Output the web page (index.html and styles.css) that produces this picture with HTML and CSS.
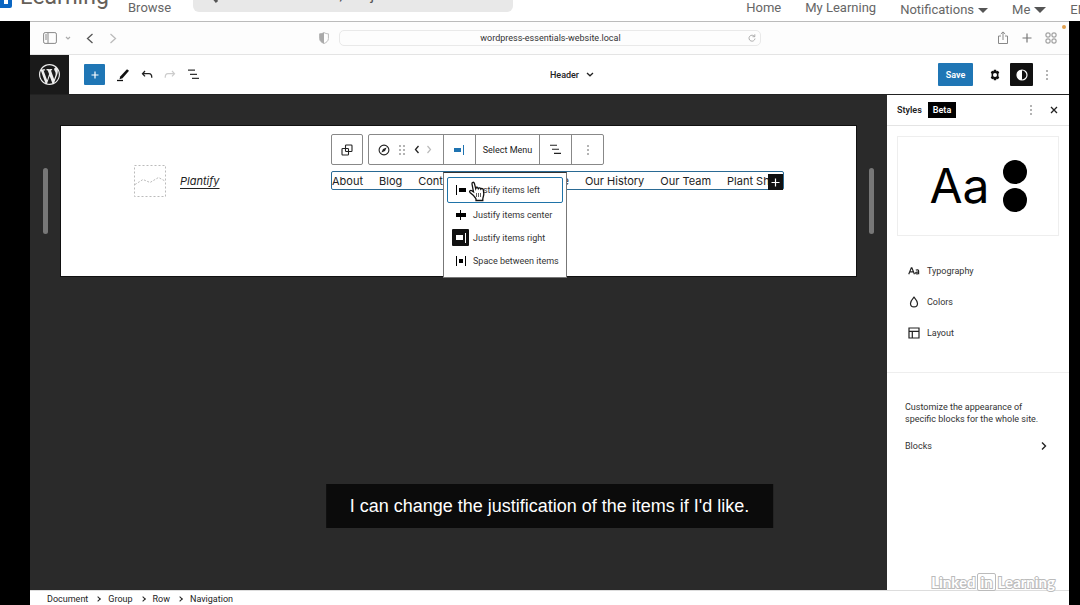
FILE: index.html
```html
<!DOCTYPE html>
<html lang="en">
<head>
<meta charset="utf-8">
<title>LinkedIn Learning</title>
<link rel="stylesheet" href="styles.css">
</head>
<body>
<header class="topbar">
  <a class="brand" href="#"><span class="brand-mark"><svg width="12" height="24" viewBox="0 0 12 24"><path d="M0 0h12v22a2 2 0 0 1-2 2H0z" fill="#0a66c2"/><path d="M4 8h4v12H4z" fill="#fff"/></svg></span><span class="brand-name">Learning</span></a>
  <a class="toplink browse" href="#">Browse</a>
  <div class="search"><svg width="14" height="14" viewBox="0 0 14 14"><path d="M9.500 1a4.500 4.500 0 1 0 0 .1M3 6l5 6" fill="none" stroke="#555" stroke-width="3"/></svg><input type="text" aria-label="Search" placeholder="Search for skills, subjects or software"></div>
  <nav class="topnav">
    <a class="toplink" href="#">Home</a>
    <a class="toplink" href="#">My Learning</a>
    <button class="toplink low" type="button">Notifications<i class="caret"></i></button>
    <button class="toplink low me" type="button">Me<i class="caret wide"></i></button>
    <button class="toplink low" type="button">EN</button>
  </nav>
</header>

<main class="stage">
  <div class="screen">
    <div class="browser">
      <div class="tools">
        <button type="button" aria-label="Sidebar"><svg width="14" height="12" viewBox="0 0 14 12"><rect x=".6" y=".6" width="12.800" height="10.800" rx="1.500" fill="none" stroke="#888"/><path d="M5 1v10M2 3h2M2 5h2M2 7h2" stroke="#888" fill="none"/></svg></button>
        <button type="button" aria-label="Tab groups" class="mini"><svg width="6" height="4" viewBox="0 0 6 4"><path d="M1 1l2 2 2-2" fill="none" stroke="#aaa" stroke-width="1.200"/></svg></button>
        <button type="button" aria-label="Back"><svg width="8" height="11" viewBox="0 0 8 11"><path d="M6.500 1L1.500 5.500l5 4.500" fill="none" stroke="#555" stroke-width="1.300"/></svg></button>
        <button type="button" aria-label="Forward"><svg width="8" height="11" viewBox="0 0 8 11"><path d="M1.500 1l5 4.500-5 4.500" fill="none" stroke="#bbb" stroke-width="1.300"/></svg></button>
        <svg class="shield" width="10" height="12" viewBox="0 0 10 12"><path d="M5 .6c1.500.9 2.800 1.100 4.400 1.200v4.700c0 2.500-2 4-4.400 5C2.600 10.500.6 9 .6 6.500V1.800C2.200 1.700 3.500 1.500 5 .6z" fill="#fff" stroke="#bbb"/><path d="M5 .6v10.900C2.600 10.500.6 9 .6 6.500V1.800C2.200 1.700 3.500 1.500 5 .6z" fill="#aaa"/></svg>
      </div>
      <div class="address"><input type="text" aria-label="Address" value="wordpress-essentials-website.local"><button type="button" aria-label="Reload"><svg width="8" height="8" viewBox="0 0 8 8"><path d="M6.500 2.500A3 3 0 1 0 7 4.500M4.500 2.700h2.300V.3" fill="none" stroke="#999" stroke-width=".8"/></svg></button></div>
      <div class="tools end">
        <button type="button" aria-label="Share"><svg width="12" height="14" viewBox="0 0 12 14"><path d="M4 5H1.500v7.500h9V5H8M6 9V1M3.800 3L6 .9 8.200 3" fill="none" stroke="#888"/></svg></button>
        <button type="button" aria-label="New tab"><svg width="10" height="10" viewBox="0 0 10 10"><path d="M5 .5v9M.5 5h9" stroke="#777" stroke-width="1.200"/></svg></button>
        <button type="button" aria-label="Tab overview"><svg width="12" height="12" viewBox="0 0 12 12"><g fill="none" stroke="#888"><rect x="1" y="1" width="4" height="4" rx="1"/><rect x="7" y="1" width="4" height="4" rx="1"/><rect x="1" y="7" width="4" height="4" rx="1"/><rect x="7" y="7" width="4" height="4" rx="1"/></g></svg></button>
      </div>
      <span class="rec-dot"></span>
    </div>

    <div class="editor-bar">
      <a class="wp" href="#" aria-label="WordPress"><svg width="21" height="21" viewBox="0 0 20 20" fill="#eee"><path d="M20 10c0-5.510-4.490-10-10-10C4.480 0 0 4.490 0 10c0 5.520 4.480 10 10 10 5.510 0 10-4.480 10-10zM7.780 15.370L4.370 6.220c.55-.02 1.170-.08 1.170-.08.5-.06.44-1.130-.06-1.110 0 0-1.450.11-2.370.11-.18 0-.37 0-.58-.01C4.120 2.690 6.870 1.110 10 1.110c2.330 0 4.450.87 6.050 2.340-.68-.11-1.650.39-1.650 1.580 0 .74.45 1.360.9 2.100.35.61.55 1.360.55 2.460 0 1.490-1.400 5-1.400 5l-3.030-8.370c.54-.02.82-.17.82-.17.5-.05.44-1.250-.06-1.220 0 0-1.440.12-2.380.12-.87 0-2.330-.12-2.330-.12-.5-.03-.56 1.200-.06 1.220l.92.08 1.260 3.410zM17.410 10c.24-.64.74-1.870.43-4.250.7 1.290 1.050 2.710 1.050 4.250 0 3.290-1.730 6.240-4.400 7.780.97-2.590 1.940-5.200 2.920-7.780zM6.100 18.090C3.120 16.650 1.110 13.530 1.110 10c0-1.300.23-2.480.72-3.590C3.250 10.300 4.670 14.200 6.100 18.090zm4.030-6.630l2.580 6.980c-.86.29-1.760.45-2.710.45-.79 0-1.570-.11-2.290-.33.81-2.380 1.620-4.740 2.420-7.100z"/></svg></a>
      <div class="edit-tools">
        <button class="insert" type="button" aria-label="Add block"><svg width="8" height="8" viewBox="0 0 8 8"><path d="M4 .5v7M.5 4h7" stroke="#fff" stroke-width="1.200"/></svg></button>
        <button type="button" aria-label="Edit"><svg width="14" height="14" viewBox="0 0 14 14"><path d="M11 1.300l2 1.500-6.500 7.500-3 1 .7-2.800z" fill="#111"/><path d="M1 12.500h6" stroke="#111" stroke-width="1.300"/></svg></button>
        <button type="button" aria-label="Undo"><svg width="12" height="10" viewBox="0 0 12 10"><path d="M4 1L1.500 3.700 4 6.400M1.500 3.700H8c2 0 2.800 1.300 2.800 4" fill="none" stroke="#222" stroke-width="1.300"/></svg></button>
        <button type="button" aria-label="Redo"><svg width="12" height="10" viewBox="0 0 12 10"><path d="M8 1l2.500 2.700L8 6.400M10.500 3.700H4C2 3.700 1.200 5 1.200 7.700" fill="none" stroke="#ccc" stroke-width="1.200"/></svg></button>
        <button type="button" aria-label="List view"><svg width="13" height="11" viewBox="0 0 13 11"><path d="M1 1.200h7M3 5.300h7M5 9.400h7" stroke="#333" stroke-width="1.200"/></svg></button>
      </div>
      <button class="doc-title" type="button">Header<svg width="8" height="5" viewBox="0 0 8 5"><path d="M1 1l3 2.800L7 1" fill="none" stroke="#222" stroke-width="1.300"/></svg></button>
      <div class="edit-actions">
        <button class="save" type="button">Save</button>
        <button class="gear" type="button" aria-label="Settings"><svg width="12" height="12" viewBox="0 0 12 12"><path d="M4.900.8h2.200l.4 1.400 1.400-.4 1.400 1.800-.9 1.200v2.400l.9 1.200-1.400 1.800-1.400-.4-.4 1.400H4.900l-.4-1.400-1.400.4-1.400-1.800.9-1.200V4.800l-.9-1.200 1.400-1.800 1.400.4z" fill="#111"/><circle cx="6" cy="6" r="2" fill="#fff"/></svg></button>
        <button class="contrast" type="button" aria-label="Styles"><svg width="12" height="12" viewBox="0 0 12 12"><circle cx="6" cy="6" r="5" fill="none" stroke="#fff" stroke-width="1.200"/><path d="M6 1a5 5 0 0 0 0 10z" fill="#fff"/></svg></button>
        <button class="more" type="button" aria-label="Options"><svg width="4" height="12" viewBox="0 0 4 12" fill="#555"><circle cx="2" cy="2" r=".8"/><circle cx="2" cy="6" r=".8"/><circle cx="2" cy="10" r=".8"/></svg></button>
      </div>
    </div>

    <div class="workspace">
      <section class="canvas">
        <span class="handle"></span>
        <div class="sheet">
          <div class="site">
            <svg width="32" height="32" viewBox="0 0 32 32"><rect x=".5" y=".5" width="31" height="31" fill="none" stroke="#bbb" stroke-dasharray="2 2"/><path d="M1 19.500l8-5 7 3 8.500-5L31 16" fill="none" stroke="#bbb" stroke-dasharray="2 1.500"/></svg>
            <a class="site-title" href="#">Plantify</a>
          </div>
          <div class="menu-block">
            <div class="block-tools">
              <div class="tool-group"><button class="sq" type="button" aria-label="Select parent"><svg width="12" height="12" viewBox="0 0 12 12"><g fill="none" stroke="#222" stroke-width="1.100"><rect x="4.500" y="1" width="6.500" height="6.500" rx=".8"/><rect x="1" y="4.500" width="6.500" height="6.500" rx=".8"/></g></svg></button></div>
              <div class="tool-group">
                <div class="mover">
                  <button type="button" aria-label="Navigation"><svg width="12" height="12" viewBox="0 0 12 12"><circle cx="6" cy="6" r="4.900" fill="none" stroke="#222" stroke-width="1.100"/><path d="M8.600 3.400L7 7 3.400 8.600 5 5z" fill="#222"/></svg></button>
                  <button type="button" aria-label="Drag"><svg width="8" height="12" viewBox="0 0 8 12" fill="#555"><circle cx="2" cy="2" r=".8"/><circle cx="6" cy="2" r=".8"/><circle cx="2" cy="6" r=".8"/><circle cx="6" cy="6" r=".8"/><circle cx="2" cy="10" r=".8"/><circle cx="6" cy="10" r=".8"/></svg></button>
                  <button type="button" aria-label="Move left"><svg width="6" height="9" viewBox="0 0 6 9"><path d="M4.500 1l-3 3.500 3 3.500" fill="none" stroke="#222" stroke-width="1.300"/></svg></button>
                  <button class="right" type="button" aria-label="Move right"><svg width="6" height="9" viewBox="0 0 6 9"><path d="M1.500 1l3 3.500-3 3.500" fill="none" stroke="#bbb" stroke-width="1.200"/></svg></button>
                </div>
                <div class="justify">
                  <button class="sq" type="button" aria-label="Justify"><svg width="12" height="12" viewBox="0 0 12 12" fill="#1f73b1"><path d="M1 4h7v4H1zM10 1h1v10h-1z"/></svg></button>
                  <div class="popover" role="menu">
                    <button class="focus" type="button"><span class="ico"><svg width="12" height="12" viewBox="0 0 12 12"><path d="M1 1h1v10H1zM4 4h7v4H4z"/></svg></span>Justify items left</button>
                    <button type="button"><span class="ico"><svg width="12" height="12" viewBox="0 0 12 12"><path d="M1 4h10v4H1zM5 1h1v10H5z"/></svg></span>Justify items center</button>
                    <button type="button"><span class="ico on"><svg width="12" height="12" viewBox="0 0 12 12" fill="#fff"><path d="M1 3h7v5H1zM10 1h1v10h-1z"/></svg></span>Justify items right</button>
                    <button type="button"><span class="ico"><svg width="12" height="12" viewBox="0 0 12 12"><path d="M1 1h1v10H1zM4 4h4v4H4zM10 1h1v10h-1z"/></svg></span>Space between items</button>
                    <svg class="cursor" width="18" height="22" viewBox="0 0 18 22"><path d="M5.500 14.500L2 11.500c-1.200-1.400.5-2.700 1.800-1.800l1.700 1.200L4 3C3.700 1 5.900.7 6.400 2.400l1.300 5.200c.4-1.300 2.200-1.300 2.600 0 .6-1 2.200-.8 2.500.4.700-.9 2.300-.5 2.500.7l.5 4c.1 2-.8 3-1 5.300v1.500H8V18c-.4-1.200-1.700-2.200-2.500-3.500z" fill="#fff" stroke="#111" stroke-width="1.300"/><path d="M8.500 12v4M10.500 12v4M12.500 12v4" stroke="#333" stroke-width=".8"/></svg>
                  </div>
                </div>
                <button class="select-menu" type="button">Select Menu</button>
                <button class="sq" type="button" aria-label="List view"><svg width="13" height="11" viewBox="0 0 13 11"><path d="M1 1.200h7M3 5.300h7M5 9.400h7" stroke="#222" stroke-width="1.100"/></svg></button>
                <button class="sq" type="button" aria-label="Options"><svg width="4" height="12" viewBox="0 0 4 12" fill="#555"><circle cx="2" cy="2" r=".8"/><circle cx="2" cy="6" r=".8"/><circle cx="2" cy="10" r=".8"/></svg></button>
              </div>
            </div>
            <nav class="site-nav">
              <div class="links"><a href="#">About</a><a href="#">Blog</a><a href="#">Contact</a></div>
              <div class="links"><a href="#">Home</a><a href="#">Our History</a><a href="#">Our Team</a><a href="#">Plant Shop</a></div>
              <button class="append" type="button" aria-label="Add link"><svg width="9" height="9" viewBox="0 0 9 9"><path d="M4.500.5v8M.5 4.500h8" stroke="#fff" stroke-width="1.200"/></svg></button>
            </nav>
          </div>
        </div>
        <span class="handle"></span>
      </section>

      <aside class="styles">
        <div class="styles-head"><h2>Styles</h2><span class="beta">Beta</span>
          <button class="dots" type="button" aria-label="More"><svg width="4" height="12" viewBox="0 0 4 12" fill="#555"><circle cx="2" cy="2" r=".8"/><circle cx="2" cy="6" r=".8"/><circle cx="2" cy="10" r=".8"/></svg></button>
          <button type="button" aria-label="Close"><svg width="8" height="8" viewBox="0 0 8 8"><path d="M1 1l6 6M7 1L1 7" stroke="#222" stroke-width="1.300"/></svg></button>
        </div>
        <div class="preview"><span class="aa">Aa</span><span class="circles"><i></i><i></i></span></div>
        <div class="style-list">
          <button type="button"><svg width="12" height="10" viewBox="0 0 13 10"><path d="M.8 8.500L3.600 1.500h.6L7 8.500M2 6h4M8.500 4.200c1-.9 3-.7 3 .8v3.500M11.500 6c-2 0-3.200.3-3.200 1.300S10.500 8.800 11.500 7.300" fill="none" stroke="#222" stroke-width="1.300"/></svg>Typography</button>
          <button type="button"><svg width="12" height="12" viewBox="0 0 12 12"><path d="M6 1.200C4.500 3 2.500 5 2.500 7.400a3.500 3.500 0 0 0 7 0C9.500 5 7.500 3 6 1.200z" fill="none" stroke="#222" stroke-width="1.200"/></svg>Colors</button>
          <button type="button"><svg width="12" height="12" viewBox="0 0 12 12"><path d="M1 1h10v10H1zM1 4.300h10M4.300 4.300V11" fill="none" stroke="#222" stroke-width="1.200"/></svg>Layout</button>
        </div>
        <div class="customize">
          <p>Customize the appearance of specific blocks for the whole site.</p>
          <button type="button">Blocks<svg width="6" height="10" viewBox="0 0 6 10"><path d="M1 1.500L4.500 5 1 8.500" fill="none" stroke="#222" stroke-width="1.400"/></svg></button>
        </div>
      </aside>
    </div>

    <footer class="crumbs"><a href="#">Document</a><b></b><a href="#">Group</a><b></b><a href="#">Row</a><b></b><a href="#">Navigation</a></footer>
    <div class="caption">I can change the justification of the items if I'd like.</div>
    <div class="watermark"><span>Linked</span><span class="in">in</span><span>Learning</span></div>
  </div>
</main>
</body>
</html>
```
FILE: styles.css
```css
* { box-sizing: border-box; }
body { margin: 0; height: 100vh; overflow: hidden; display: flex; flex-direction: column; background: #fff; color: #222; font-family: Roboto, "Liberation Sans", sans-serif; font-size: 9px; }
button { border: 0; padding: 0; margin: 0; background: none; font: inherit; color: inherit; display: flex; align-items: center; justify-content: center; flex: none; }
a { color: inherit; text-decoration: none; }
svg { display: block; flex: none; }
input { font: inherit; border: 0; background: none; padding: 0; min-width: 0; }

.topbar { flex: none; height: 21px; overflow: hidden; display: flex; align-items: flex-end; }
.brand { display: flex; align-items: flex-end; gap: 8px; width: 128px; padding-bottom: 10px; }
.brand-mark { padding-bottom: 3px; }
.brand-name { font: 400 23px/28px Roboto, sans-serif; color: #666059; }
.toplink { font: 400 13px/16px Roboto, "Liberation Sans", sans-serif; color: #666; padding-bottom: 5px; white-space: nowrap; }
.browse { width: 65px; }
.search { width: 320px; height: 34px; margin-bottom: 9px; border-radius: 6px; background: #e8e8e8; display: flex; align-items: flex-end; gap: 10px; padding: 0 16px 8px; }
.search input { flex: 1; font: 15px/18px Roboto, sans-serif; }
.search input::placeholder { color: #555; }
.topnav { margin-left: auto; margin-right: -7px; display: flex; align-items: flex-end; gap: 24px; }
.toplink.low { padding-bottom: 3px; }
.caret { border: 5px solid transparent; border-top-color: #555; border-bottom: 0; margin-left: 4px; }
.caret.wide { border-width: 6px 6px 0; margin-left: 4px; }

.stage { flex: 1; min-height: 0; background: #000; padding: 0 11px 0 30px; display: flex; }
.screen { flex: 1; min-width: 0; position: relative; display: flex; flex-direction: column; background: #fff; }

.browser { height: 34px; flex: none; display: grid; grid-template-columns: 1fr 422px 1fr; align-items: center; border-top: 1px solid #bbb; border-bottom: 1px solid #e4e4e4; background: #fdfdfd; position: relative; }
.tools { display: flex; align-items: center; gap: 15px; padding-left: 13px; }
.tools .mini { margin-left: -7px; }
.tools.end { justify-content: flex-end; gap: 13px; padding: 0 12px 0 0; }
.shield { margin: 0 10px 0 auto; }
.address { border: 1px solid #e9e9e9; border-radius: 5px; height: 16px; display: flex; align-items: center; padding: 0 4px 0 14px; }
.address input { flex: 1; text-align: center; color: #333; }
.rec-dot { position: absolute; top: 3px; right: 3px; width: 4px; height: 4px; border-radius: 50%; background: #e0a050; }

.editor-bar { height: 40px; flex: none; display: grid; grid-template-columns: 39px 1fr auto 1fr; align-items: center; border-bottom: 1px solid #222; }
.wp { height: 39px; background: #1a1a1a; display: flex; align-items: center; justify-content: center; }
.edit-tools { display: flex; align-items: center; gap: 11px; padding-left: 15px; }
.insert { width: 21px; height: 21px; background: #1f76b5; border-radius: 1px; }
.doc-title { gap: 7px; font-weight: 500; margin-left: 6px; }
.edit-actions { display: flex; align-items: center; justify-content: flex-end; padding-right: 20px; }
.save { width: 35px; height: 23px; background: #1f76b5; color: #fff; font-weight: 600; border-radius: 1px; }
.gear { margin: 0 9px 0 16px; }
.contrast { width: 23px; height: 23px; background: #111; border-radius: 1px; }
.more { margin-left: 12px; }

.workspace { flex: 1; min-height: 0; display: flex; }
.canvas { flex: 1; min-width: 0; background: #2a2a2a; padding: 31px 13px; display: flex; gap: 13px; align-items: flex-start; }
.handle { width: 5px; height: 66px; margin-top: 42px; border-radius: 3px; background: #777; }
.sheet { flex: 1; min-width: 0; min-height: 150px; background: #fff; box-shadow: 0 0 0 1px #111; display: flex; padding: 8px 72px 8px 73px; }
.site { flex: 0 0 197px; display: flex; align-items: center; gap: 14px; height: 32px; margin-top: 31px; }
.site-title { font-family: Inter, sans-serif; font-size: 11px; font-style: italic; text-decoration: underline; text-underline-offset: 3px; text-decoration-thickness: 1px; }
.menu-block { flex: 1; min-width: 0; display: flex; flex-direction: column; gap: 6px; }
.block-tools { display: flex; gap: 5px; }
.tool-group { display: flex; height: 31px; border: 1px solid #888; border-radius: 2px; background: #fff; }
.tool-group > * + * { border-left: 1px solid #888; }
.sq { width: 30px; height: 29px; }
.tool-group > .sq + .sq, .tool-group > .select-menu + .sq { width: 32px; }
.mover { display: flex; align-items: center; gap: 8px; width: 74px; padding-left: 9px; }
.mover .right { margin-left: -2px; }
.justify { position: relative; width: 32px; }
.select-menu { width: 64px; }
.popover { position: absolute; z-index: 2; top: 37px; left: -1px; width: 124px; background: #fff; border: 1px solid #777; border-top-color: #333; padding: 4px 3px 5px; display: flex; flex-direction: column; white-space: nowrap; }
.popover button { justify-content: flex-start; height: 23px; padding-left: 5px; gap: 4px; color: #333; }
.popover .focus { height: 26px; border: 1px solid #1f73a8; border-radius: 2px; padding-left: 4px; }
.ico { width: 17px; height: 17px; display: flex; align-items: center; justify-content: center; }
.ico.on { background: #111; border-radius: 1px; }
.cursor { position: absolute; left: 24px; top: 8px; }
.site-nav { position: relative; height: 19px; border: 1px solid #2a6a94; border-radius: 2px; display: flex; justify-content: space-between; align-items: center; font-family: Inter, sans-serif; font-size: 11px; }
.links { display: flex; gap: 16px; white-space: nowrap; }
.append { position: absolute; right: 0; top: 2px; width: 15px; height: 16px; background: #111; }

.styles { flex: none; width: 182px; background: #fff; display: flex; flex-direction: column; }
.styles-head { height: 31px; display: flex; align-items: center; border-bottom: 1px solid #e4e4e4; padding: 0 11px 0 10px; }
.styles-head h2 { margin: 0 6px 0 0; font-size: 9px; font-weight: 600; }
.beta { background: #000; color: #fff; font-weight: 600; line-height: 16px; padding: 0 5px; }
.dots { margin: 0 17px 0 auto; }
.preview { margin: 10px; height: 100px; border: 1px solid #eee; display: flex; align-items: center; justify-content: center; gap: 13px; color: #000; }
.aa { font-family: Inter, sans-serif; font-size: 48px; line-height: 60px; }
.circles { display: grid; gap: 4px; }
.circles i { width: 24px; height: 24px; border-radius: 50%; background: #000; }
.style-list { padding: 17px 21px 31px; display: flex; flex-direction: column; align-items: flex-start; gap: 15px; border-bottom: 1px solid #eee; }
.style-list button { gap: 7px; height: 16px; color: #333; }
.customize { padding: 28px 22px 0 18px; color: #333; }
.customize p { margin: 0 0 16px; line-height: 12px; }
.customize button { width: 100%; justify-content: space-between; }

.crumbs { flex: none; height: 15px; border-top: 1px solid #ddd; display: flex; align-items: center; padding: 1px 0 0 17px; gap: 8px; }
.crumbs b { width: 4px; height: 4px; border: 1px solid #222; border-width: 1px 1px 0 0; transform: rotate(45deg); }
.caption { position: absolute; left: 50%; bottom: 77px; transform: translateX(-50%); background: #0b0b0b; color: #fff; font: 18px/44px "Liberation Sans", sans-serif; padding: 0 24px; white-space: nowrap; }
.watermark { position: absolute; right: 14px; bottom: 14px; display: flex; align-items: center; gap: 2px; font: 700 15px/18px Lato, sans-serif; color: #fff; -webkit-text-stroke: 2px #bbb; paint-order: stroke fill; }
.in { border: 1px solid #bbb; border-radius: 2px; line-height: 16px; padding: 0 2px; }
```
